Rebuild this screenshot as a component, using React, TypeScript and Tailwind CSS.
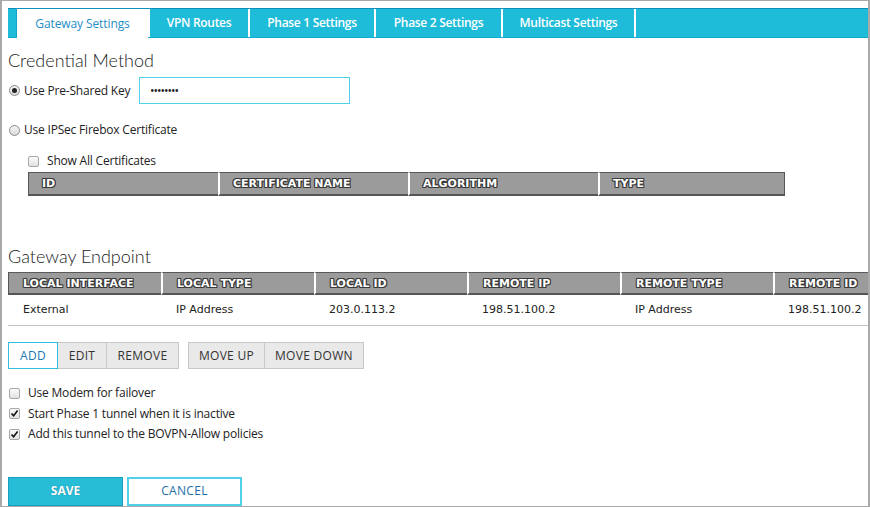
import React from "react";

const OS = { fontFamily: '"Open Sans", "Liberation Sans", sans-serif' };
const HEAD = { fontFamily: 'Lato, "Open Sans", sans-serif' };
const VER = { fontFamily: '"DejaVu Sans", Verdana, sans-serif' };

function Radio({ checked }: { checked?: boolean }) {
  return (
    <span className="w-[11px] h-[11px] rounded-full border border-[#8a8a8a] bg-gradient-to-b from-[#f4f4f4] to-[#dcdcdc] flex items-center justify-center shrink-0">
      {checked && <span className="w-[5px] h-[5px] rounded-full bg-[#222]" />}
    </span>
  );
}

function Check({ checked }: { checked?: boolean }) {
  return (
    <span className="w-[11px] h-[11px] rounded-[2px] border border-[#a8a8a8] bg-gradient-to-b from-[#fafafa] to-[#e2e2e2] flex items-center justify-center shrink-0">
      {checked && (
        <svg width="9" height="9" viewBox="0 0 9 9">
          <path d="M1.5 4.5 L3.6 6.8 L7.6 1.6" fill="none" stroke="#111" strokeWidth="1.6" />
        </svg>
      )}
    </span>
  );
}

const hdrShadow =
  "text-white font-bold [text-shadow:1px_0_#3a3a3a,-1px_0_#3a3a3a,0_1px_#3a3a3a,0_-1px_#3a3a3a,1px_1px_#3a3a3a,-1px_-1px_#3a3a3a,1px_-1px_#3a3a3a,-1px_1px_#3a3a3a]";

export default function App() {
  const tabs = ["VPN Routes", "Phase 1 Settings", "Phase 2 Settings", "Multicast Settings"];
  const tabW = [100, 126, 127, 133];
  const certCols = [
    ["ID", 190],
    ["CERTIFICATE NAME", 190],
    ["ALGORITHM", 190],
    ["TYPE", 187],
  ] as const;
  const epCols = ["LOCAL INTERFACE", "LOCAL TYPE", "LOCAL ID", "REMOTE IP", "REMOTE TYPE", "REMOTE ID"];
  const epData = ["External", "IP Address", "203.0.113.2", "198.51.100.2", "IP Address", "198.51.100.2"];
  return (
    <div className="w-[870px] h-[507px] overflow-hidden bg-white">
      <div
        className="w-[870px] h-[507px] overflow-hidden border-t border-l-2 border-r-2 border-b border-[#a9a9a9] pl-[6px] pt-[7px] flex flex-col text-[#222] [&>*]:shrink-0"
        style={OS}
      >
        {/* Tab bar */}
        <div className="h-[30px] w-[860px] bg-[#1fbcd9] border-t border-[#0c8fbf] border-b border-b-[#12a9cc] flex items-stretch">
          <div className="w-[9px] shrink-0 border-r border-[#0fa4c8]" />
          <div className="w-[131px] bg-white flex items-center justify-center text-[12px] tracking-[-0.1px] text-[#1e8ec4] -mb-px">
            Gateway Settings
          </div>
          {tabs.map((t, i) => (
            <div
              key={t}
              className="flex items-center justify-center text-[12px] tracking-[-0.3px] text-white font-semibold border-l-2 border-white"
              style={{ width: tabW[i] }}
            >
              {t}
            </div>
          ))}
          <div className="flex-1 border-l-2 border-white" />
        </div>

        {/* Credential Method */}
        <div className="mt-[11px] h-[22px] flex items-center text-[18px] font-light text-[#222]" style={HEAD}>
          Credential Method
        </div>
        <div className="mt-[6px] h-[27px] flex items-center">
          <div className="flex items-center gap-[4px] w-[131px] pl-px">
            <Radio checked />
            <span className="text-[12px] tracking-[-0.2px]">Use Pre-Shared Key</span>
          </div>
          <div className="w-[211px] h-[27px] border-[1.5px] border-[#4fd1ea] flex items-center pl-[10px] text-[12px] tracking-[-1px]">
            ••••••••
          </div>
        </div>
        <div className="mt-[17px] h-[18px] flex items-center gap-[4px] pl-px">
          <Radio />
          <span className="text-[12px] tracking-[-0.2px]">Use IPSec Firebox Certificate</span>
        </div>
        <div className="mt-[13px] h-[18px] flex items-center pl-[20px] gap-[8px]">
          <Check />
          <span className="text-[12px] tracking-[-0.2px]">Show All Certificates</span>
        </div>
        <div className="mt-[2px] ml-[20px] flex h-[24px]">
          {certCols.map(([c, w], i) => (
            <div
              key={c}
              className={`bg-[#9b9b9b] border-t border-b-2 border-t-[#5a5a5a] border-b-[#555] flex items-center pl-[13px] pt-[1px] text-[11px] ${hdrShadow} ${
                i === 0 ? "border-l border-l-[#555]" : "border-l-2 border-l-white"
              } ${i === certCols.length - 1 ? "border-r border-r-[#555]" : ""}`}
              style={{ ...VER, width: w }}
            >
              {c}
            </div>
          ))}
        </div>

        {/* Gateway Endpoint */}
        <div className="mt-[49px] h-[22px] flex items-center text-[18px] font-light" style={HEAD}>
          Gateway Endpoint
        </div>
        <div className="mt-[5px] flex h-[23px]">
          {epCols.map((c, i) => (
            <div
              key={c}
              className={`bg-[#9b9b9b] border-t border-b-2 border-t-[#5a5a5a] border-b-[#555] flex items-center pl-[14px] pt-[3px] text-[11px] shrink-0 ${hdrShadow} ${
                i === 0 ? "border-l border-l-[#555]" : "border-l-2 border-l-white"
              }`}
              style={{ ...VER, width: i === 5 ? 100 : 153 }}
            >
              {c}
            </div>
          ))}
        </div>
        <div className="flex h-[31px] pt-[1px] border-b border-[#c4c4c4] w-[860px]">
          {epData.map((d, i) => (
            <div
              key={i}
              className="flex items-center pl-[15px] text-[11px] text-[#222] shrink-0"
              style={{ ...VER, width: i === 5 ? 100 : 153 }}
            >
              {d}
            </div>
          ))}
        </div>

        {/* Buttons */}
        <div className="mt-[16px] h-[27px] flex text-[12px] tracking-[0.3px]">
          <div className="w-[50px] border border-[#30bfdc] bg-white flex items-center justify-center text-[#1a78b4]">
            ADD
          </div>
          <div className="w-[49px] border border-l-0 border-[#c8c8c8] bg-[#e9e9e9] flex items-center justify-center text-[#333]">
            EDIT
          </div>
          <div className="w-[72px] border border-l-0 border-[#c8c8c8] bg-[#e9e9e9] flex items-center justify-center text-[#333]">
            REMOVE
          </div>
          <div className="w-[77px] ml-[9px] border border-[#c8c8c8] bg-[#e9e9e9] flex items-center justify-center text-[#333]">
            MOVE UP
          </div>
          <div className="w-[99px] border border-l-0 border-[#c8c8c8] bg-[#e9e9e9] flex items-center justify-center text-[#333]">
            MOVE DOWN
          </div>
        </div>

        <div className="mt-[14px] flex flex-col">
          {[
            ["Use Modem for failover", false],
            ["Start Phase 1 tunnel when it is inactive", true],
            ["Add this tunnel to the BOVPN-Allow policies", true],
          ].map(([t, c]) => (
            <div key={t as string} className="h-[20.5px] flex items-center gap-[8px] pl-px">
              <Check checked={c as boolean} />
              <span className="text-[12px] tracking-[-0.2px]">{t as string}</span>
            </div>
          ))}
        </div>

        <div className="mt-[32px] flex gap-[4px]">
          <div className="w-[115px] h-[29px] bg-[#27bdd7] border border-[#169fc0] flex items-center justify-center text-white font-bold text-[12px] [text-shadow:0_0_1px_#0b6f8c]">
            SAVE
          </div>
          <div className="w-[115px] h-[29px] bg-white border-2 border-[#4fd1ea] flex items-center justify-center text-[#1f6fa8] text-[12px] tracking-[0.3px]">
            CANCEL
          </div>
        </div>
      </div>
    </div>
  );
}
